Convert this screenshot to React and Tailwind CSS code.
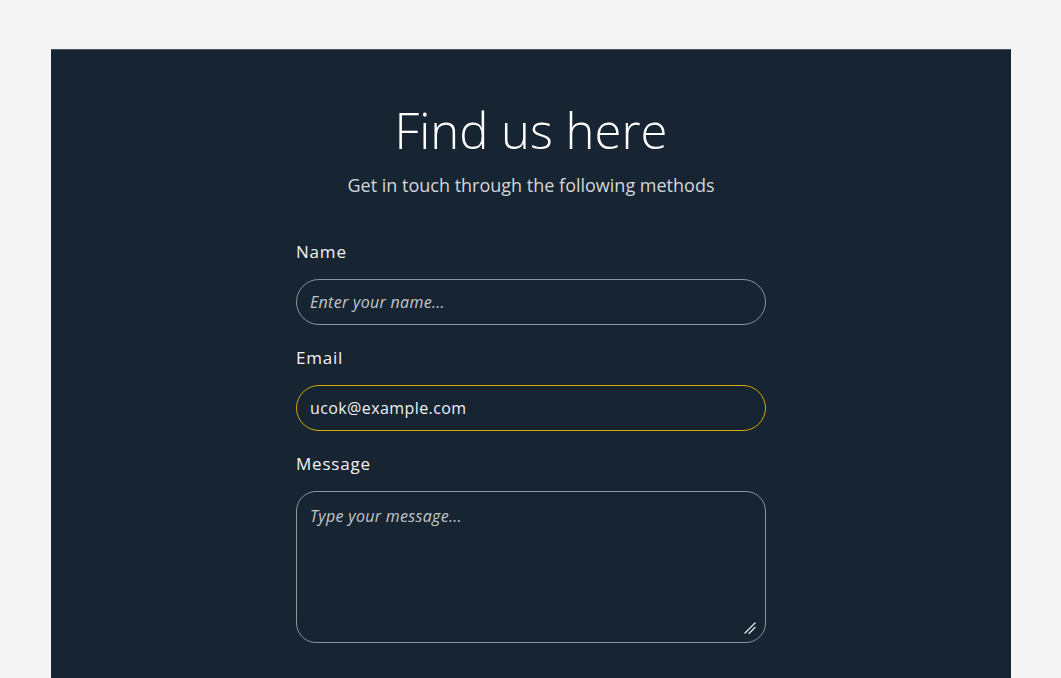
import React from "react";

const App = () => {
  return (
    <div
      className="min-h-screen bg-[#f4f4f4] pt-[49px] pl-[51px]"
      style={{ fontFamily: '"Open Sans", "Noto Sans", sans-serif' }}
    >
      <div className="w-[960px] bg-[#172532] border-t border-[#4a5560] pt-[48px] pb-16">
        {/* header */}
        <div className="text-center">
          <h1 className="text-[49px] leading-[64px] font-light text-white">
            Find us here
          </h1>
          <p className="mt-[10px] text-[18px] leading-[26px] text-[#d3d7db]">
            Get in touch through the following methods
          </p>
        </div>

        {/* form */}
        <form className="w-[470px] mx-auto mt-[42px] flex flex-col gap-[21px]">
          <div className="flex flex-col gap-[15px]">
            <label className="text-[17px] leading-6 tracking-[0.8px] text-[#f2f2f2]">
              Name
            </label>
            <input
              type="text"
              placeholder="Enter your name..."
              className="h-[46px] rounded-full border border-[#8b959d] bg-transparent px-[13px] text-[16px] tracking-[0.3px] text-white placeholder:italic placeholder:text-[#c3c7cb] outline-none"
            />
          </div>

          <div className="flex flex-col gap-[15px]">
            <label className="text-[17px] leading-6 tracking-[0.8px] text-[#f2f2f2]">
              Email
            </label>
            <input
              type="email"
              defaultValue="ucok@example.com"
              className="h-[46px] rounded-full border border-[#d6a900] bg-transparent px-[13px] text-[16px] tracking-[0.4px] text-[#f0f0f0] outline-none"
            />
          </div>

          <div className="flex flex-col gap-[15px]">
            <label className="text-[17px] leading-6 tracking-[0.8px] text-[#f2f2f2]">
              Message
            </label>
            <div className="relative">
              <textarea
                placeholder="Type your message..."
                className="block w-full h-[152px] resize-none rounded-[20px] border border-[#8b959d] bg-transparent px-[13px] py-[12px] text-[16px] tracking-[0.3px] text-white placeholder:italic placeholder:text-[#c3c7cb] outline-none"
              />
              {/* resize grip */}
              <svg
                className="absolute right-[10px] bottom-[9px] pointer-events-none"
                width="12"
                height="12"
                viewBox="0 0 12 12"
                fill="none"
                stroke="#e6e8ea"
                strokeWidth="1.3"
                strokeLinecap="round"
              >
                <path d="M1 11 L11 1" />
                <path d="M5 11.5 L11 5.5" />
              </svg>
            </div>
          </div>
        </form>
      </div>
    </div>
  );
};

export default App;
